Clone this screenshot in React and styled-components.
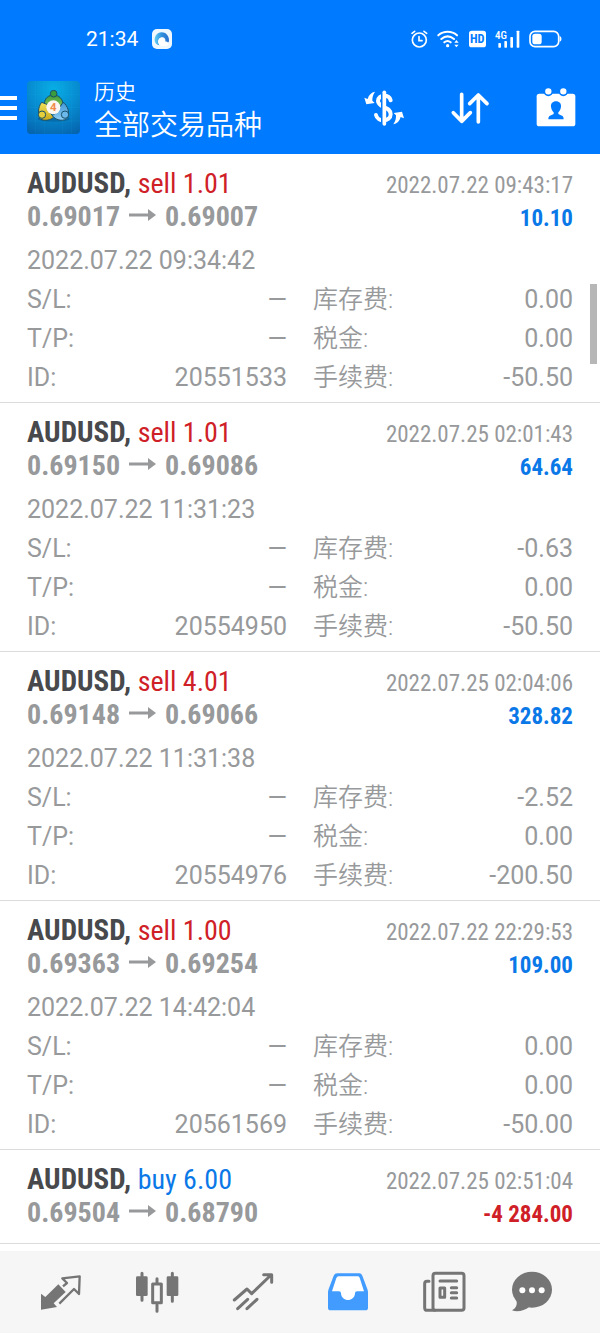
import React from "react";
import styled, { createGlobalStyle } from "styled-components";

const sans = `Roboto, "Noto Sans CJK SC", sans-serif`;
const condensed = `"Roboto Condensed", "Liberation Sans Narrow", Roboto, "Noto Sans CJK SC", sans-serif`;

const blue = "#007aff";
const red = "#cf2027";
const profit = "#0b78e8";
const gray = "#97999b";

const GlobalStyle = createGlobalStyle`
  *, *::before, *::after { box-sizing: border-box; }
  body { margin: 0; background: #fff; font-family: ${sans}; }
  button { border: 0; padding: 0; background: none; font: inherit; color: inherit; cursor: pointer; }
`;

const Screen = styled.div`
  display: flex;
  flex-direction: column;
  min-height: 100vh;
`;

const Header = styled.header`
  background: ${blue};
  color: #fff;
`;

const StatusBar = styled.div`
  display: flex;
  align-items: center;
  justify-content: space-between;
  height: 61px;
  padding: 16px 38px 0 86px;
`;

const StatusGroup = styled.div`
  display: flex;
  align-items: center;
  gap: ${(p) => p.$gap}px;
`;

const Clock = styled.time`
  font-size: 21px;
  line-height: 24px;
`;

const Toolbar = styled.div`
  display: flex;
  align-items: center;
  height: 93px;
  padding-right: 1px;
`;

const MenuButton = styled.button`
  display: flex;
  flex-direction: column;
  justify-content: center;
  gap: 6px;
  width: 27px;
  height: 53px;
`;

const MenuLine = styled.span`
  width: 17px;
  height: 4px;
  background: #fff;
`;

const Titles = styled.div`
  flex: 1;
  min-width: 0;
  padding: 2px 0 0 14px;
`;

const Section = styled.h1`
  margin: 0;
  font-size: 21px;
  line-height: 34px;
  font-weight: 350;
`;

const Filter = styled.p`
  margin: 0;
  font-size: 28px;
  line-height: 34px;
  font-weight: 350;
  white-space: nowrap;
`;

const ToolButton = styled.button`
  display: grid;
  place-items: center;
  width: 86px;
  height: 93px;
`;

const History = styled.main`
  position: relative;
  flex: 1;
  padding-bottom: 7px;
`;

const ScrollThumb = styled.div`
  position: absolute;
  top: 130px;
  right: 3px;
  width: 7px;
  height: 80px;
  background: #b7b7b7;
`;

const Deal = styled.article`
  padding: 13px 27px ${(p) => (p.$open ? 5 : 14)}px;
  border-bottom: 1px solid #dcdcdc;
`;

const Line = styled.div`
  display: flex;
  align-items: baseline;
  justify-content: space-between;
  height: 33px;
  font-family: ${condensed};
  font-size: 23px;
  line-height: 33px;
  color: ${gray};
  white-space: nowrap;
`;

const Symbol = styled.h2`
  margin: 0;
  font-size: 29px;
  line-height: 33px;
  font-weight: 700;
  color: #47494c;
`;

const Side = styled.span`
  font-size: 28px;
  font-weight: 400;
  color: ${(p) => (p.$side === "buy" ? profit : red)};
`;

const Prices = styled.span`
  font-size: 28px;
  font-weight: 700;
`;

const PriceArrow = styled.svg`
  width: 27px;
  height: 12px;
  margin: 0 9px 5px;
`;

const Amount = styled.strong`
  font-weight: 700;
  color: ${(p) => (p.$loss ? red : profit)};
`;

const Details = styled.div`
  margin-top: 8px;
  font-size: 25px;
  line-height: 39px;
  color: ${gray};
`;

const Opened = styled.time`
  display: block;
`;

const Fields = styled.dl`
  display: grid;
  grid-template-columns: 1fr 1fr;
  column-gap: 26px;
  margin: 0;
`;

const Field = styled.div`
  display: flex;
  justify-content: space-between;
  height: 39px;
`;

const Term = styled.dt`
  &:lang(zh) {
    font-weight: 350;
  }
`;

const Value = styled.dd`
  margin: 0;
`;

const TabBar = styled.nav`
  position: sticky;
  bottom: 0;
  display: grid;
  grid-template-columns: repeat(5, 96fr) 80fr;
  height: 82px;
  padding: 0 28px 0 13px;
  background: #f6f6f6;
`;

const Tab = styled.button`
  display: grid;
  place-items: center;
  color: ${(p) => (p.$active ? "#429bff" : "#757575")};
`;

const Glyph = styled.svg.attrs({ viewBox: "0 0 132 132", "aria-hidden": true })`
  width: 44px;
  height: 44px;
  fill: none;
  stroke-linejoin: round;
`;

const BrowserBadge = () => (
  <svg width="20" height="20" viewBox="0 0 60 60" aria-hidden="true">
    <defs>
      <linearGradient id="swirl" x1="0" y1="0" x2="1" y2="0">
        <stop offset="0" stopColor="#5fcdf5" />
        <stop offset="0.5" stopColor="#2f8fdc" />
        <stop offset="1" stopColor="#2a6fd0" />
      </linearGradient>
    </defs>
    <rect width="60" height="60" rx="15" fill="#f0f8ff" />
    <path d="M18 48C4 42 5 22 18 13C32 4 53 14 51 37C48 43 43 44 40 38C42 28 34 22 27 26C17 31 18 42 24 49Z" fill="url(#swirl)" />
    <path d="M18 40C18 30 24 24 31 26C38 28 38 34 40 38C45 36 51 42 48 47C46 52 26 52 22 49Z" fill="#fff" />
  </svg>
);

const AlarmIcon = () => (
  <svg width="17" height="18" viewBox="0 0 51 54" fill="none" stroke="#fff" strokeWidth="5" strokeLinecap="round" aria-hidden="true">
    <circle cx="25" cy="30" r="21" />
    <path d="M24 20V32H33M3 10L11 4M47 10L39 4" />
  </svg>
);

const WifiIcon = () => (
  <svg width="23" height="18" viewBox="0 0 69 54" fill="none" stroke="#fff" strokeWidth="6" strokeLinecap="round" aria-hidden="true">
    <path d="M4 16C20 2 44 2 60 16M13 27C25 17 39 17 51 27M22 37C28 32 35 32 41 37" />
    <circle cx="32" cy="47" r="5" fill="#fff" stroke="none" />
    <path d="M52 38L58 30L65 38ZM52 44L58 52L65 44Z" fill="#fff" stroke="none" />
  </svg>
);

const HdIcon = () => (
  <svg width="17" height="18" viewBox="0 0 51 54" aria-hidden="true">
    <rect y="2" width="51" height="50" rx="8" fill="#fff" />
    <text x="25" y="40" textAnchor="middle" fontFamily={condensed} fontSize="37" fontWeight="700" fill={blue}>HD</text>
  </svg>
);

const SignalIcon = () => (
  <svg width="25" height="18" viewBox="0 0 75 54" fill="#fff" aria-hidden="true">
    <text x="0" y="26" fontFamily={condensed} fontSize="33" fontWeight="500">4G</text>
    <rect x="10" y="39" width="8" height="14" rx="2" />
    <rect x="28" y="33" width="8" height="20" rx="2" />
    <rect x="46" y="21" width="8" height="32" rx="2" />
    <rect x="65" y="2" width="8" height="51" rx="2" />
  </svg>
);

const BatteryIcon = () => (
  <svg width="33" height="18" viewBox="0 0 99 54" aria-hidden="true">
    <rect x="3" y="4" width="86" height="46" rx="15" fill="none" stroke="#fff" strokeWidth="5" />
    <rect x="10" y="11" width="28" height="32" rx="8" fill="#fff" />
    <path d="M92 19C99 19 99 35 92 35Z" fill="#fff" />
  </svg>
);

const AppLogo = () => (
  <svg width="53" height="53" viewBox="0 0 159 159" role="img" aria-label="MetaTrader 4">
    <defs>
      <radialGradient id="tile" cx="0.5" cy="0.15" r="0.95">
        <stop offset="0" stopColor="#08aee6" />
        <stop offset="0.5" stopColor="#078bd0" />
        <stop offset="1" stopColor="#0563ad" />
      </radialGradient>
      <linearGradient id="green" x1="0" y1="0" x2="0" y2="1">
        <stop offset="0" stopColor="#3c9a3a" />
        <stop offset="1" stopColor="#86c75a" />
      </linearGradient>
      <linearGradient id="yellow" x1="0" y1="0" x2="0" y2="1">
        <stop offset="0" stopColor="#f1e25a" />
        <stop offset="1" stopColor="#c9a91c" />
      </linearGradient>
      <linearGradient id="sky" x1="0" y1="0" x2="0" y2="1">
        <stop offset="0" stopColor="#3f97d8" />
        <stop offset="1" stopColor="#8fcdf3" />
      </linearGradient>
    </defs>
    <rect width="159" height="159" rx="12" fill="url(#tile)" />
    <path d="M26 0V159M53 0V159M106 0V159M133 0V159M0 40H159M0 80H159M0 120H159" stroke="#2ab4ea" strokeOpacity="0.15" strokeWidth="2" />
    <ellipse cx="80" cy="114" rx="48" ry="8" fill="#044a80" opacity="0.4" />
    <g stroke="#17506a" strokeWidth="3">
      <path d="M52 72C52 50 66 42 80 42C96 42 108 54 108 72L94 78H66Z" fill="url(#green)" />
      <path d="M44 64C32 78 32 104 40 114C52 121 72 118 80 108L68 94L60 70Z" fill="url(#yellow)" />
      <path d="M108 64C124 74 128 98 122 110C112 122 88 120 76 104L88 94Z" fill="url(#sky)" />
      <circle cx="80" cy="38" r="10" fill="#3b9c3d" />
      <circle cx="45" cy="101" r="11" fill="#e5d03c" />
      <circle cx="114" cy="101" r="11" fill="#6db8ea" />
    </g>
    <circle cx="79" cy="79" r="21" fill="#fbf6ef" />
    <text x="79" y="91" textAnchor="middle" fontFamily="Roboto, sans-serif" fontSize="34" fontWeight="700" fill="#f08a4b">4</text>
  </svg>
);

const CurrencyIcon = () => (
  <Glyph>
    <path d="M86 43C83 24 48 24 48 45C48 66 86 60 86 85C86 108 46 108 42 87" stroke="#fff" strokeWidth="12" strokeLinecap="round" />
    <path d="M61 20V112" stroke={blue} strokeWidth="8" />
    <path d="M67 19V114" stroke="#fff" strokeWidth="11" strokeLinecap="round" />
    <path d="M7 35L17 39C20 27 28 19 39 17C32 27 31 35 31 44L38 51L13 55Z" fill="#fff" />
    <path d="M126 97L116 93C113 105 105 113 94 115C101 105 102 97 102 88L95 81L120 77Z" fill="#fff" />
  </Glyph>
);

const SortIcon = () => (
  <Glyph stroke="#fff" strokeWidth="11" strokeLinecap="round">
    <path d="M41 25V106M16 80L41 106L67 80M91 108V27M65 53L91 27L117 53" />
  </Glyph>
);

const PeriodIcon = () => (
  <Glyph>
    <rect x="8" y="23" width="116" height="98" rx="8" fill="#fff" />
    <circle cx="43" cy="16" r="12" fill="#fff" stroke={blue} strokeWidth="5" />
    <circle cx="88" cy="16" r="12" fill="#fff" stroke={blue} strokeWidth="5" />
    <path d="M66 46C76 46 82 53 81 62C80 71 76 75 73 79V84L84 89C88 91 89 95 89 100H43C43 95 44 91 48 89L59 84V79C56 75 52 71 51 62C50 53 56 46 66 46Z" fill={blue} />
  </Glyph>
);

const QuotesIcon = () => (
  <Glyph>
    <path d="M6 71L19 81L58 43L80 66L44 100L54 111L6 119Z" fill="currentColor" />
    <path d="M72 49L84 39L70 25L122 19L120 72L105 57L61 101" stroke="currentColor" strokeWidth="7" />
  </Glyph>
);

const ChartIcon = () => (
  <Glyph stroke="currentColor" strokeWidth="9" strokeLinecap="round">
    <path d="M21 10V91M112 10V94M66 26V38M66 104V124" />
    <rect x="3" y="19" width="35" height="59" rx="4" fill="currentColor" stroke="none" />
    <rect x="95" y="19" width="35" height="59" rx="4" fill="currentColor" stroke="none" />
    <rect x="53" y="42" width="26" height="56" />
  </Glyph>
);

const TradeIcon = () => (
  <Glyph stroke="currentColor" strokeWidth="9" strokeLinecap="round">
    <path d="M10 90L48 57L62 71L120 15M98 14H122V37M20 116L50 88M48 116L78 88" />
  </Glyph>
);

const InboxIcon = () => (
  <Glyph>
    <path d="M34 10H100Q106 10 109 17L124 57Q126 62 126 67V113Q126 121 118 121H14Q6 121 6 113V67Q6 62 8 57L23 17Q26 10 34 10Z" fill="currentColor" />
    <path d="M38 19H95Q99 19 101 23L114 64H93Q87 64 87 70C86 97 46 97 45 70Q45 64 39 64H18L31 24Q33 19 38 19Z" fill="#fff" />
  </Glyph>
);

const NewsIcon = () => (
  <Glyph stroke="currentColor" strokeWidth="9" strokeLinecap="round">
    <rect x="33" y="10" width="93" height="111" rx="7" />
    <path d="M21 34H15Q8 34 8 42V113Q8 121 16 121H38" />
    <path d="M54 33H104M88 53H104M88 68H104M88 84H104" />
    <rect x="54" y="54" width="14" height="28" />
  </Glyph>
);

const MessagesIcon = () => (
  <Glyph>
    <ellipse cx="66" cy="59" rx="60" ry="54" fill="currentColor" />
    <path d="M17 86C24 100 20 113 6 121C22 127 44 122 58 110Z" fill="currentColor" />
    <g fill="#fff">
      <circle cx="37" cy="61" r="9" />
      <circle cx="66" cy="61" r="9" />
      <circle cx="95" cy="61" r="9" />
    </g>
  </Glyph>
);

const deals = [
  { side: "sell", volume: "1.01", from: "0.69017", to: "0.69007", closed: "2022.07.22 09:43:17", amount: "10.10", opened: "2022.07.22 09:34:42", id: "20551533", swap: "0.00", tax: "0.00", fee: "-50.50" },
  { side: "sell", volume: "1.01", from: "0.69150", to: "0.69086", closed: "2022.07.25 02:01:43", amount: "64.64", opened: "2022.07.22 11:31:23", id: "20554950", swap: "-0.63", tax: "0.00", fee: "-50.50" },
  { side: "sell", volume: "4.01", from: "0.69148", to: "0.69066", closed: "2022.07.25 02:04:06", amount: "328.82", opened: "2022.07.22 11:31:38", id: "20554976", swap: "-2.52", tax: "0.00", fee: "-200.50" },
  { side: "sell", volume: "1.00", from: "0.69363", to: "0.69254", closed: "2022.07.22 22:29:53", amount: "109.00", opened: "2022.07.22 14:42:04", id: "20561569", swap: "0.00", tax: "0.00", fee: "-50.00" },
  { side: "buy", volume: "6.00", from: "0.69504", to: "0.68790", closed: "2022.07.25 02:51:04", amount: "-4 284.00" },
];

const tabs = [
  { label: "行情", Icon: QuotesIcon },
  { label: "图表", Icon: ChartIcon },
  { label: "交易", Icon: TradeIcon },
  { label: "历史", Icon: InboxIcon, active: true },
  { label: "新闻", Icon: NewsIcon },
  { label: "消息", Icon: MessagesIcon },
];

function DealField({ term, lang, children }) {
  return (
    <Field>
      <Term lang={lang}>{term}</Term>
      <Value>{children}</Value>
    </Field>
  );
}

function DealCard({ deal }) {
  return (
    <Deal $open={Boolean(deal.opened)}>
      <Line>
        <Symbol>
          AUDUSD, <Side $side={deal.side}>{deal.side} {deal.volume}</Side>
        </Symbol>
        <time>{deal.closed}</time>
      </Line>
      <Line>
        <Prices>
          {deal.from}
          <PriceArrow viewBox="0 0 27 12" aria-hidden="true">
            <path d="M0 6H21" stroke={gray} strokeWidth="3" />
            <path d="M19 0L27 6L19 12Z" fill={gray} />
          </PriceArrow>
          {deal.to}
        </Prices>
        <Amount $loss={deal.amount.startsWith("-")}>{deal.amount}</Amount>
      </Line>
      {deal.opened && (
        <Details>
          <Opened>{deal.opened}</Opened>
          <Fields>
            <DealField term="S/L:">—</DealField>
            <DealField term="库存费:" lang="zh-CN">{deal.swap}</DealField>
            <DealField term="T/P:">—</DealField>
            <DealField term="税金:" lang="zh-CN">{deal.tax}</DealField>
            <DealField term="ID:">{deal.id}</DealField>
            <DealField term="手续费:" lang="zh-CN">{deal.fee}</DealField>
          </Fields>
        </Details>
      )}
    </Deal>
  );
}

export default function App() {
  return (
    <Screen>
      <GlobalStyle />
      <Header>
        <StatusBar>
          <StatusGroup $gap={14}>
            <Clock>21:34</Clock>
            <BrowserBadge />
          </StatusGroup>
          <StatusGroup $gap={9}>
            <AlarmIcon />
            <WifiIcon />
            <HdIcon />
            <SignalIcon />
            <BatteryIcon />
          </StatusGroup>
        </StatusBar>
        <Toolbar>
          <MenuButton aria-label="菜单">
            <MenuLine />
            <MenuLine />
            <MenuLine />
          </MenuButton>
          <AppLogo />
          <Titles>
            <Section>历史</Section>
            <Filter>全部交易品种</Filter>
          </Titles>
          <ToolButton aria-label="交易品种"><CurrencyIcon /></ToolButton>
          <ToolButton aria-label="排序"><SortIcon /></ToolButton>
          <ToolButton aria-label="时期"><PeriodIcon /></ToolButton>
        </Toolbar>
      </Header>
      <History>
        {deals.map((deal) => (
          <DealCard key={deal.closed} deal={deal} />
        ))}
        <ScrollThumb />
      </History>
      <TabBar>
        {tabs.map(({ label, Icon, active }) => (
          <Tab key={label} aria-label={label} aria-current={active ? "page" : undefined} $active={active}>
            <Icon />
          </Tab>
        ))}
      </TabBar>
    </Screen>
  );
}
